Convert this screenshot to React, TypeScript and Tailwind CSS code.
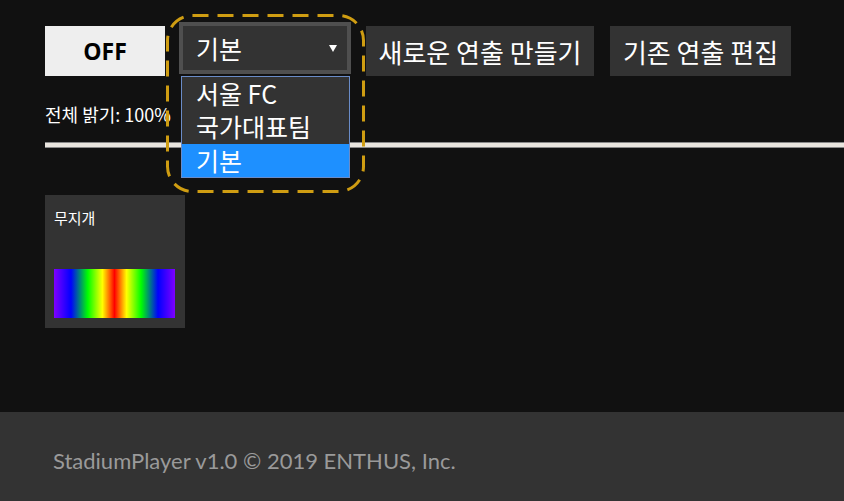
import React from "react";

const kr = { fontFamily: '"Noto Sans CJK KR", "Noto Sans", sans-serif' };

export default function App() {
  return (
    <div className="w-[844px] h-[501px] bg-[#111111] flex flex-col overflow-hidden" style={kr}>
      <div className="flex-1 relative">
        <div className="flex items-start pl-[45px] pt-[22px]">
          <button className="mt-[4px] w-[120px] h-[50px] bg-[#eeeeee] text-black text-[23px] font-bold flex items-center justify-center" style={{ fontFamily: '"Open Sans", sans-serif' }}>
            OFF
          </button>
          <div className="relative ml-[14px] w-[172px] h-[52px]">
            <div className="w-full h-full border-[4px] border-[#4f4f4f] bg-[#333333] flex items-center pl-[13px] pr-[10px] text-white text-[25px] leading-none">
              <span className="flex-1">기본</span>
              <svg width="8" height="7" viewBox="0 0 8 7">
                <polygon points="0,0 8,0 4,7" fill="#ffffff" />
              </svg>
            </div>
            <div className="absolute left-[2px] top-[54px] w-[169px] border border-[#6a8cc8] bg-[#333333] text-white text-[25px] leading-[33px] z-10">
              <div className="pl-[14px] h-[33px]">서울 FC</div>
              <div className="pl-[14px] h-[34px]">국가대표팀</div>
              <div className="pl-[14px] h-[33px] bg-[#1e90ff]">기본</div>
            </div>
            <svg className="absolute left-[-13px] top-[-8px] z-20" width="199" height="179" viewBox="0 0 199 179">
              <rect x="1.5" y="1.5" width="196" height="176" rx="25" ry="25" fill="none" stroke="#cf9d12" strokeWidth="3" strokeDasharray="16 9" />
            </svg>
          </div>
          <button className="mt-[4px] ml-[15px] w-[228px] h-[50px] bg-[#333333] text-white text-[26px] flex items-center justify-center">
            새로운 연출 만들기
          </button>
          <button className="mt-[4px] ml-[16px] w-[181px] h-[50px] bg-[#333333] text-white text-[26px] flex items-center justify-center">
            기존 연출 편집
          </button>
        </div>
        <div className="pl-[45px] mt-[26px] text-white text-[18px] leading-[24px]">전체 밝기: 100%</div>
        <div className="ml-[45px] mt-[16px] h-[6px] bg-[#e9e5de] border-y border-[#888]" />
        <div className="ml-[45px] mt-[47px] w-[140px] h-[133px] bg-[#333333] pt-[13px] px-[9px]">
          <div className="text-white text-[15px] leading-[20px]">무지개</div>
          <div
            className="mt-[41px] w-[121px] h-[49px]"
            style={{
              background:
                "linear-gradient(to right, #7f00ff 0%, #0000ff 14%, #00ff00 28%, #ffff00 40%, #ff0000 50%, #ffff00 60%, #00ff00 72%, #0000ff 86%, #7f00ff 100%)",
            }}
          />
        </div>
      </div>
      <div className="h-[89px] bg-[#333333] flex items-center pl-[53px] pt-[8px] text-[#9a9a9a] text-[22px]" style={{ fontFamily: 'Lato, sans-serif' }}>
        StadiumPlayer v1.0 © 2019 ENTHUS, Inc.
      </div>
    </div>
  );
}
